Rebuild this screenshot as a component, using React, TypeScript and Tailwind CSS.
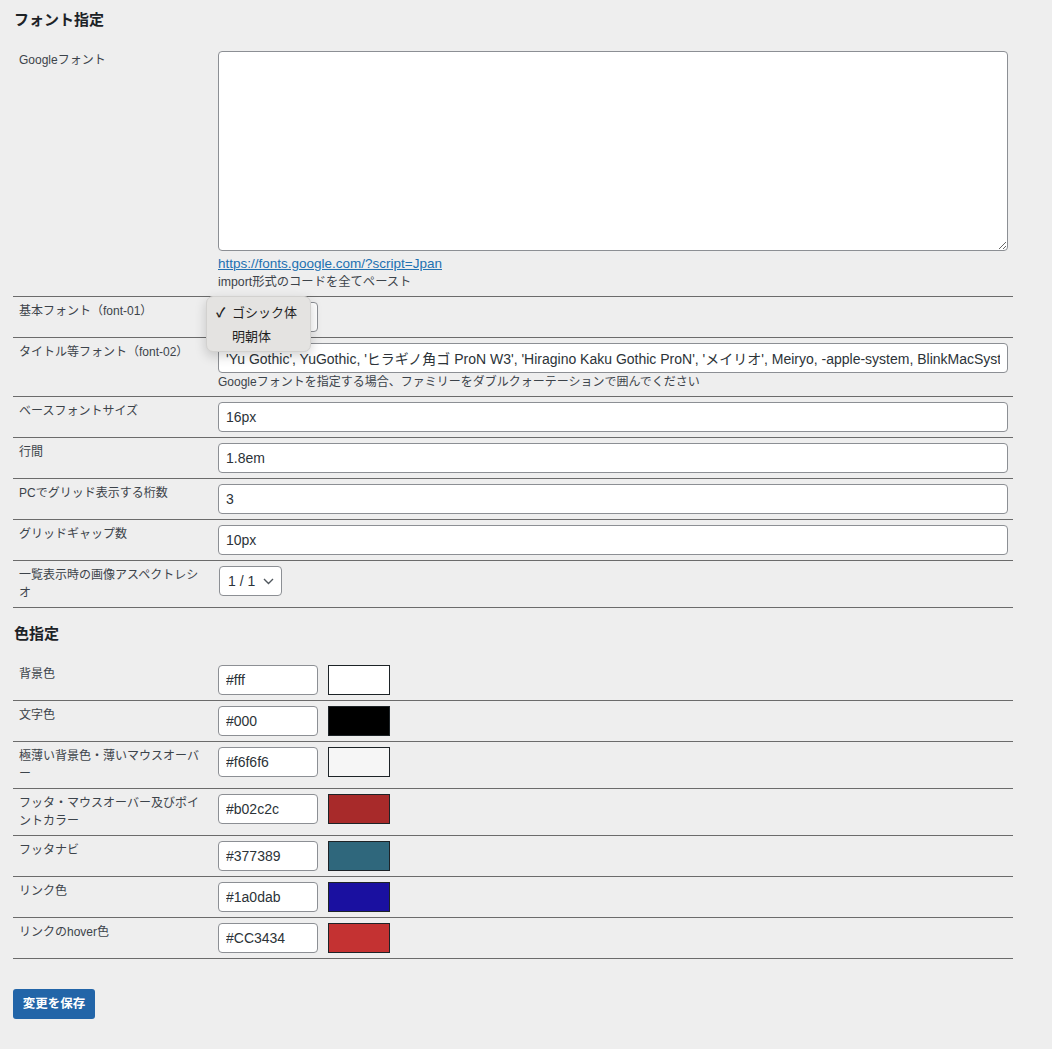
import React from "react";

const Row = ({
  label,
  children,
}: {
  label: React.ReactNode;
  children?: React.ReactNode;
}) => (
  <div className="flex border-b border-[#6b6b6b]">
    <div className="w-[205px] shrink-0 pl-[6px] pr-[13px] py-[5px] text-[12px] leading-[18px] text-[#3c434a]">
      {label}
    </div>
    <div className="flex-1 py-[5px] pr-[5px] min-w-0">{children}</div>
  </div>
);

const TextInput = ({ value, w }: { value: string; w?: string }) => (
  <input
    readOnly
    value={value}
    className={`${w ?? "w-full"} block h-[30px] rounded-[4px] border border-[#8c8f94] bg-white px-[7px] text-[14px] text-[#2c3338] outline-none`}
  />
);

const Chevron = () => (
  <svg width="11" height="7" viewBox="0 0 11 7" fill="none">
    <path d="M1 1l4.5 4.5L10 1" stroke="#50575e" strokeWidth="1.4" />
  </svg>
);

const ColorRow = ({ label, value, color }: { label: React.ReactNode; value: string; color: string }) => (
  <Row label={label}>
    <div className="flex items-start gap-[10px]">
      <TextInput value={value} w="w-[100px]" />
      <div className="w-[62px] h-[30px] border border-[#1d2327]" style={{ backgroundColor: color }} />
    </div>
  </Row>
);

export default function App() {
  return (
    <div className="min-h-[1049px] w-full bg-[#eeeeee] [font-family:'Liberation_Sans','Noto_Sans_CJK_JP',sans-serif] text-[#3c434a]">
      <div className="ml-[13px] w-[1000px] pt-[10px]">
        <h2 className="pl-[1px] text-[15px] leading-[20px] font-bold text-[#1d2327]">フォント指定</h2>
        <div className="mt-[16px]">
          <Row label="Googleフォント">
            <textarea
              readOnly
              className="block w-full h-[200px] rounded-[4px] border border-[#8c8f94] bg-white outline-none resize"
            />
            <div className="mt-[4px] text-[13.5px] leading-[18px]">
              <span className="text-[#2271b1] underline">https://fonts.google.com/?script=Jpan</span>
            </div>
            <div className="text-[12.3px] leading-[18px] text-[#3c434a]">import形式のコードを全てペースト</div>
          </Row>
          <Row label="基本フォント（font-01）">
            <div className="relative">
              <div className="w-[100px] h-[30px] rounded-[4px] border border-[#8c8f94] bg-white" />
              <div className="absolute left-[-12px] top-[-6px] w-[105px] h-[56px] rounded-[7px] border border-[#d2d1cf] bg-[#e4e3e1] shadow-[0_4px_12px_rgba(0,0,0,0.18)] pt-[4px] text-[13px] text-[#1f1f1f]">
                <div className="flex h-[24px] items-center">
                  <span className="w-[25px] pl-[9px] text-[13px] font-bold">✓</span>
                  <span>ゴシック体</span>
                </div>
                <div className="flex h-[24px] items-center">
                  <span className="w-[25px]" />
                  <span>明朝体</span>
                </div>
              </div>
            </div>
          </Row>
          <Row label="タイトル等フォント（font-02）">
            <TextInput value="'Yu Gothic', YuGothic, 'ヒラギノ角ゴ ProN W3', 'Hiragino Kaku Gothic ProN', 'メイリオ', Meiryo, -apple-system, BlinkMacSystemFont, 'Segoe UI', sans-serif" />
            <div className="text-[12px] leading-[18px] text-[#3c434a]">
              Googleフォントを指定する場合、ファミリーをダブルクォーテーションで囲んでください
            </div>
          </Row>
          <Row label="ベースフォントサイズ">
            <TextInput value="16px" />
          </Row>
          <Row label="行間">
            <TextInput value="1.8em" />
          </Row>
          <Row label="PCでグリッド表示する桁数">
            <TextInput value="3" />
          </Row>
          <Row label="グリッドギャップ数">
            <TextInput value="10px" />
          </Row>
          <Row label="一覧表示時の画像アスペクトレシオ">
            <div className="ml-[1px] flex h-[30px] w-[63px] items-center justify-between rounded-[4px] border border-[#8c8f94] bg-white pl-[8px] pr-[7px] text-[14px] text-[#2c3338]">
              <span>1 / 1</span>
              <Chevron />
            </div>
          </Row>
        </div>

        <h2 className="mt-[16px] pl-[1px] text-[15px] leading-[20px] font-bold text-[#1d2327]">色指定</h2>
        <div className="mt-[16px]">
          <ColorRow label="背景色" value="#fff" color="#ffffff" />
          <ColorRow label="文字色" value="#000" color="#000000" />
          <ColorRow label="極薄い背景色・薄いマウスオーバー" value="#f6f6f6" color="#f6f6f6" />
          <ColorRow label="フッタ・マウスオーバー及びポイントカラー" value="#b02c2c" color="#a82a2a" />
          <ColorRow label="フッタナビ" value="#377389" color="#2f677c" />
          <ColorRow label="リンク色" value="#1a0dab" color="#1a10a0" />
          <ColorRow label="リンクのhover色" value="#CC3434" color="#c43232" />
        </div>

        <button className="mt-[30px] flex h-[30px] w-[82px] items-center justify-center rounded-[3px] bg-[#2265a8] text-[12.5px] font-bold text-white">
          変更を保存
        </button>
      </div>
    </div>
  );
}
